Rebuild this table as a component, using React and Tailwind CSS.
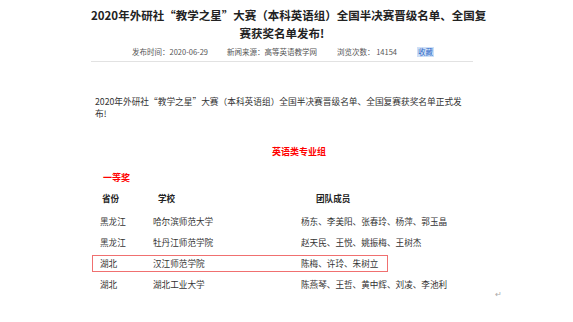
export default function App() {
  const rows = [
    ["黑龙江", "哈尔滨师范大学", "杨东、李美阳、张春玲、杨萍、郭玉晶", false],
    ["黑龙江", "牡丹江师范学院", "赵天民、王悦、姚振梅、王树杰", false],
    ["湖北", "汉江师范学院", "陈梅、许玲、朱树立", true],
    ["湖北", "湖北工业大学", "陈燕琴、王哲、黄中辉、刘凌、李池利", false],
  ];
  return (
    <div
      className="w-[573px] h-[322px] bg-white overflow-hidden relative"
      style={{ fontFamily: '"Noto Sans CJK SC", "Noto Sans", sans-serif' }}
    >
      <div className="ml-[91px] w-[382px] flex flex-col">
        <div className="pt-[6px] text-[11.5px] leading-[18px] font-bold text-[#222] text-center whitespace-nowrap">
          <div>2020年外研社“教学之星”大赛（本科英语组）全国半决赛晋级名单、全国复</div>
          <div>赛获奖名单发布!</div>
        </div>
        <div className="mt-[5px] h-[10px] flex items-center text-[7.5px] leading-[10px] text-[#555] whitespace-nowrap">
          <span className="ml-[41px] w-[95px]">发布时间：2020-06-29</span>
          <span className="w-[110px]">新闻来源：高等英语教学网</span>
          <span className="w-[80px]">浏览次数： 14154</span>
          <span className="text-[#2f6bc8] bg-[#cfe0f7] px-[1px]">收藏</span>
        </div>
        <div className="mt-[4px] h-px bg-[#e2e2e2]" />
        <div className="mt-[34px] ml-[4px] text-[8.7px] leading-[12px] text-[#333] whitespace-nowrap">
          <div>2020年外研社“教学之星”大赛（本科英语组）全国半决赛晋级名单、全国复赛获奖名单正式发</div>
          <div>布!</div>
        </div>
        <div className="mt-[26px] ml-[181px] text-[9px] leading-[12px] font-bold text-[#ff0000]">
          英语类专业组
        </div>
        <div className="mt-[14px] ml-[12px] text-[9px] leading-[12px] font-bold text-[#ff0000]">
          一等奖
        </div>
        <div className="mt-[6px] ml-[1px] w-[296px] h-[17px] flex items-center text-[8.6px] font-bold text-[#222] whitespace-nowrap">
          <span className="w-[66px] pl-[10px]">省份</span>
          <span className="w-[158px]">学校</span>
          <span>团队成员</span>
        </div>
        <div className="mt-[6px] ml-[1px] flex flex-col gap-[4px]">
          {rows.map(([p, s, m, hl], i) => (
            <div
              key={i}
              className={
                hl
                  ? "w-[296px] h-[17px] flex items-center border border-[#f07070] pl-[7px] text-[8.6px] text-[#333] whitespace-nowrap"
                  : "w-[296px] h-[17px] flex items-center border border-transparent pl-[7px] text-[8.6px] text-[#333] whitespace-nowrap"
              }
            >
              <span className="w-[53px] shrink-0">{p}</span>
              <span className="w-[148px] shrink-0">{s}</span>
              <span>{m}</span>
            </div>
          ))}
        </div>
        <div className="-mt-[4px] ml-[404px] text-[8px] leading-[10px] text-[#aaa]">↵</div>
      </div>
    </div>
  );
}
